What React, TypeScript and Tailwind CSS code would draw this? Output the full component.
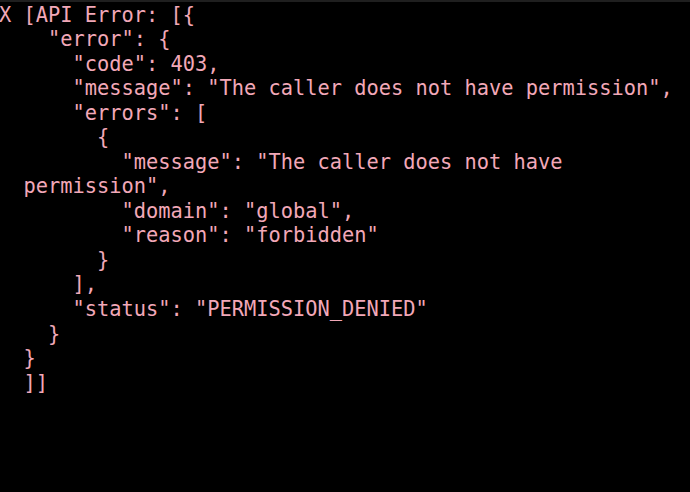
import React from "react";

const lines = [
  "X [API Error: [{",
  "    \"error\": {",
  "      \"code\": 403,",
  "      \"message\": \"The caller does not have permission\",",
  "      \"errors\": [",
  "        {",
  "          \"message\": \"The caller does not have",
  "  permission\",",
  "          \"domain\": \"global\",",
  "          \"reason\": \"forbidden\"",
  "        }",
  "      ],",
  "      \"status\": \"PERMISSION_DENIED\"",
  "    }",
  "  }",
  "  ]]",
];

export default function App() {
  return (
    <div className="w-[690px] h-[492px] bg-black overflow-hidden flex flex-col">
      <div className="h-[2px] bg-[#1f1f1f] shrink-0" />
      <pre
        className="m-0 mt-[0.6px] ml-[-1px] text-[20.35px] leading-[24.53px] text-[#f2a8b8] whitespace-pre"
        style={{ fontFamily: '"DejaVu Sans Mono", "Liberation Mono", monospace' }}
      >
        {lines.map((l, i) => (
          <div key={i}>{l}</div>
        ))}
      </pre>
    </div>
  );
}
